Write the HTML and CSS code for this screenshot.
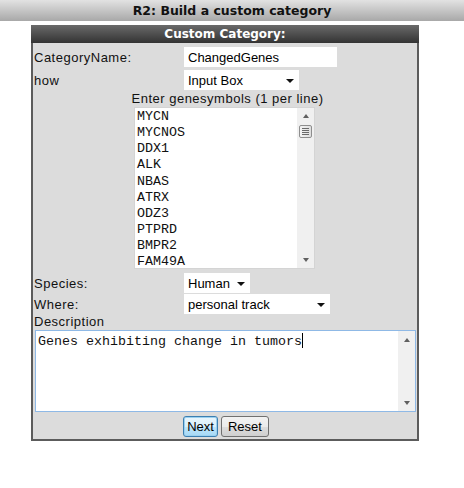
FILE: index.html
```html
<!DOCTYPE html>
<html>
<head>
<meta charset="utf-8">
<link rel="stylesheet" href="styles.css">
</head>
<body>
<div class="titlebar">R2: Build a custom category</div>
<div class="panel">
  <div class="panel-head">Custom Category:</div>
  <div class="panel-body">
    <div class="row row-first">
      <span class="label">CategoryName:</span>
      <span class="input w-name">ChangedGenes</span>
    </div>
    <div class="row">
      <span class="label">how</span>
      <span class="select w-how"><span>Input Box</span><span class="arrow"></span></span>
    </div>
    <div class="caption">Enter genesymbols (1 per line)</div>
    <div class="genebox">
      <div class="genelines">
        <div>MYCN</div><div>MYCNOS</div><div>DDX1</div><div>ALK</div><div>NBAS</div>
        <div>ATRX</div><div>ODZ3</div><div>PTPRD</div><div>BMPR2</div><div>FAM49A</div>
      </div>
      <div class="scroll">
        <span class="up"></span>
        <span class="thumb"><i></i><i></i><i></i><i></i></span>
        <span class="down"></span>
      </div>
    </div>
    <div class="row row-species">
      <span class="label">Species:</span>
      <span class="select w-species"><span>Human</span><span class="arrow"></span></span>
    </div>
    <div class="row row-where">
      <span class="label">Where:</span>
      <span class="select w-where"><span>personal track</span><span class="arrow"></span></span>
    </div>
    <div class="desc-label">Description</div>
    <div class="descbox">
      <div class="desctext">Genes exhibiting change in tumors<span class="caret"></span></div>
      <div class="scroll scroll-desc">
        <span class="up"></span>
        <span class="down"></span>
      </div>
    </div>
    <div class="buttons">
      <span class="btn btn-focus">Next</span>
      <span class="btn">Reset</span>
    </div>
  </div>
</div>
</body>
</html>
```
FILE: styles.css
```css
html, body {
  margin: 0;
  padding: 0;
  background: #ffffff;
  font-family: "Liberation Sans", Arial, sans-serif;
  font-size: 13px;
  color: #000;
}
.titlebar {
  height: 21px;
  line-height: 22px;
  text-align: center;
  font-family: "DejaVu Sans", Verdana, sans-serif;
  font-weight: bold;
  font-size: 12.5px;
  color: #111;
  background: linear-gradient(to bottom, #e2e2e2, #a8a8a8);
}
.panel {
  margin: 4px 0 0 31px;
  width: 384px;
  border: 2px solid #5c5c5c;
  border-top: 0;
  background: #dcdcdc;
}
.panel-head {
  height: 18px;
  line-height: 18px;
  text-align: center;
  font-family: "DejaVu Sans", Verdana, sans-serif;
  font-weight: bold;
  font-size: 12px;
  color: #ffffff;
  background: linear-gradient(to bottom, #6a6a6a, #333333);
  margin: 0 -2px;
}
.panel-body {
  padding: 4px 1px 2px 1px;
}
.row {
  display: grid;
  grid-template-columns: 150px auto;
  align-items: center;
  height: 20px;
  margin-top: 3px;
}
.row-first { margin-top: 0; }
.row-species { margin-top: 4px; }
.row-where { margin-top: 1px; }
.label, .caption, .desc-label {
  letter-spacing: 0.5px;
  color: #111;
}
.input, .select {
  display: flex;
  align-items: center;
  height: 20px;
  background: #ffffff;
  box-sizing: border-box;
  padding-left: 4px;
}
.w-name { width: 153px; }
.w-how { width: 115px; }
.w-species { width: 66px; }
.w-where { width: 146px; }
.select {
  justify-content: space-between;
  padding-right: 5px;
}
.arrow {
  width: 0;
  height: 0;
  border-left: 4px solid transparent;
  border-right: 4px solid transparent;
  border-top: 4px solid #111;
  margin-top: 1px;
}
.caption {
  height: 17px;
  line-height: 18px;
  text-align: center;
  padding-left: 5px;
}
.genebox {
  margin-left: 100px;
  width: 181px;
  height: 162px;
  box-sizing: border-box;
  border: 1px solid #d4d4d4;
  background: #ffffff;
  display: flex;
  overflow: hidden;
}
.genelines {
  flex: 1;
  padding: 1px 0 0 2px;
  font-family: "Liberation Mono", "Courier New", monospace;
  font-size: 13.33px;
  line-height: 16.15px;
  color: #111;
}
.scroll {
  width: 17px;
  background: #f0f0f0;
  position: relative;
  display: flex;
  flex-direction: column;
  align-items: center;
}
.scroll .up, .scroll .down {
  width: 0;
  height: 0;
  border-left: 3.5px solid transparent;
  border-right: 3.5px solid transparent;
}
.scroll .up {
  border-bottom: 4px solid #606060;
  margin-top: 6px;
}
.scroll .down {
  border-top: 4px solid #606060;
  margin-top: auto;
  margin-bottom: 6px;
}
.thumb {
  width: 13px;
  height: 13px;
  margin-top: 7px;
  box-sizing: border-box;
  border: 1px solid #8e8e8e;
  border-radius: 2px;
  background: linear-gradient(to right, #f4f4f4, #dedede);
  display: flex;
  flex-direction: column;
  justify-content: center;
  align-items: center;
  gap: 1px;
}
.thumb i {
  display: block;
  width: 7px;
  height: 1px;
  background: #6a6a6a;
}
.desc-label {
  height: 16px;
  line-height: 16px;
}
.descbox {
  margin-left: 1px;
  width: 381px;
  height: 82px;
  box-sizing: border-box;
  border: 1px solid #8fb9e6;
  background: #ffffff;
  display: flex;
}
.desctext {
  flex: 1;
  padding: 2px 0 0 2px;
  font-family: "Liberation Mono", "Courier New", monospace;
  font-size: 13.33px;
  line-height: 17px;
  color: #111;
  white-space: nowrap;
}
.caret {
  display: inline-block;
  width: 1px;
  height: 15px;
  background: #000;
  vertical-align: -3px;
}
.scroll-desc .up { margin-top: 7px; }
.scroll-desc .down { margin-bottom: 6px; }
.buttons {
  display: flex;
  justify-content: center;
  gap: 3px;
  margin-top: 4px;
  padding-left: 2px;
}
.btn {
  display: inline-flex;
  align-items: center;
  justify-content: center;
  height: 21px;
  box-sizing: border-box;
  padding: 0 6px;
  border: 1px solid #707070;
  border-radius: 3px;
  background: linear-gradient(to bottom, #f2f2f2 0%, #ebebeb 50%, #dddddd 51%, #cfcfcf 100%);
  font-size: 13px;
  color: #000;
}
.btn-focus {
  border-color: #3c7fb1;
  background: linear-gradient(to bottom, #eaf6fd 0%, #d9f0fc 50%, #bee6fd 51%, #a7d9f5 100%);
  padding: 0 3px;
  box-shadow: inset 0 0 0 1px #9bd1f0;
}
```
